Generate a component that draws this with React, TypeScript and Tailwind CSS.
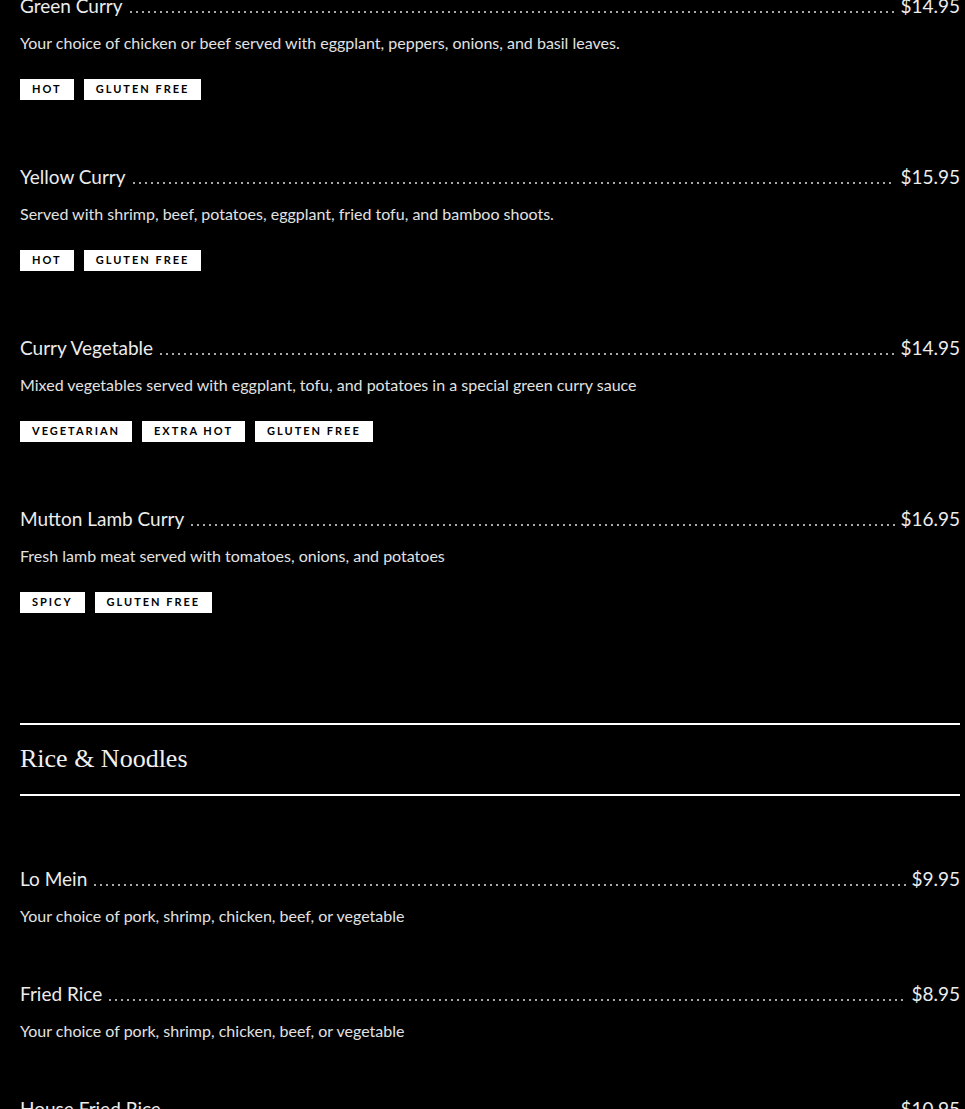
import React from "react";

type Dish = {
  name: string;
  price: string;
  desc: string;
  tags?: string[];
};

const curries: Dish[] = [
  {
    name: "Green Curry",
    price: "$14.95",
    desc: "Your choice of chicken or beef served with eggplant, peppers, onions, and basil leaves.",
    tags: ["HOT", "GLUTEN FREE"],
  },
  {
    name: "Yellow Curry",
    price: "$15.95",
    desc: "Served with shrimp, beef, potatoes, eggplant, fried tofu, and bamboo shoots.",
    tags: ["HOT", "GLUTEN FREE"],
  },
  {
    name: "Curry Vegetable",
    price: "$14.95",
    desc: "Mixed vegetables served with eggplant, tofu, and potatoes in a special green curry sauce",
    tags: ["VEGETARIAN", "EXTRA HOT", "GLUTEN FREE"],
  },
  {
    name: "Mutton Lamb Curry",
    price: "$16.95",
    desc: "Fresh lamb meat served with tomatoes, onions, and potatoes",
    tags: ["SPICY", "GLUTEN FREE"],
  },
];

const rice: Dish[] = [
  { name: "Lo Mein", price: "$9.95", desc: "Your choice of pork, shrimp, chicken, beef, or vegetable" },
  { name: "Fried Rice", price: "$8.95", desc: "Your choice of pork, shrimp, chicken, beef, or vegetable" },
  { name: "House Fried Rice", price: "$10.95", desc: "Special fried rice with shrimp, chicken, and beef" },
];

function MenuItem({ dish }: { dish: Dish }) {
  const hasTags = !!dish.tags?.length;
  return (
    <div className={hasTags ? "pb-[65px]" : "pb-[54px]"}>
      {/* name ..... price */}
      <div className="flex items-end h-6 leading-6 text-[19px] text-[#ececec]">
        <span className="shrink-0">{dish.name}</span>
        {/* dotted leader */}
        <span className="flex-1 mx-[5px] mb-[5px] h-[2px] bg-[radial-gradient(circle,#a8a8a8_0.8px,transparent_1.1px)] bg-[length:6px_2px] bg-repeat-x" />
        <span className="shrink-0">{dish.price}</span>
      </div>
      <p className="mt-[13px] h-6 leading-6 text-[16px] text-[#e2e2e2]">{dish.desc}</p>
      {hasTags && (
        <div className="mt-6 flex gap-[10px]">
          {dish.tags!.map((t) => (
            <span
              key={t}
              className="h-[21px] px-3 flex items-center bg-white text-black text-[11px] font-bold tracking-[2px]"
            >
              {t}
            </span>
          ))}
        </div>
      )}
    </div>
  );
}

export default function App() {
  return (
    <div
      className="min-h-screen bg-black px-5 overflow-hidden"
      style={{ fontFamily: "Lato, 'Noto Sans', sans-serif" }}
    >
      <div className="-mt-[6px] w-[940px]">
        {curries.map((d) => (
          <MenuItem key={d.name} dish={d} />
        ))}

        {/* section header */}
        <div className="mt-[45px] border-t-2 border-b-2 border-white pt-4 pb-[17px]">
          <h2 className="h-9 leading-9 text-[26px] text-[#f0f0f0] font-['Liberation_Serif',serif]">
            Rice &amp; Noodles
          </h2>
        </div>

        <div className="pt-[71px]">
          {rice.map((d) => (
            <MenuItem key={d.name} dish={d} />
          ))}
        </div>
      </div>
    </div>
  );
}
